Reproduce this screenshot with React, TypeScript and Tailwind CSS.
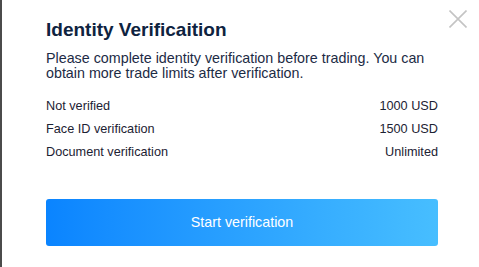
const limits = [
    { label: "Not verified", value: "1000 USD" },
    { label: "Face ID verification", value: "1500 USD" },
    { label: "Document verification", value: "Unlimited" },
];

export default function App() {
    return (
        <div className="flex h-[267px] w-[479px] overflow-hidden bg-white" style={{ fontFamily: '"Liberation Sans", Arial, sans-serif' }}>
            {/* page edge behind the dialog */}
            <div className="w-[2px] shrink-0 bg-[#4b4b4b]" />

            <div className="relative flex flex-1 flex-col pl-[44px] pr-[41px] pt-[18px]">
                <button className="absolute right-[12px] top-[10px] text-[#c4c4c4]" aria-label="Close">
                    <svg width="18" height="18" viewBox="0 0 18 18" fill="none" stroke="currentColor" strokeWidth="1.6">
                        <path d="M0.5 0.5 L17.5 17.5 M17.5 0.5 L0.5 17.5" />
                    </svg>
                </button>

                <h2 className="text-[19px] font-bold leading-[24px] text-[#0e2340]">Identity Verificaition</h2>
                <p className="mt-[9px] text-[14.3px] leading-[15px] text-[#1c2b45]">
                    Please complete identity verification before trading. You can obtain more trade limits after verification.
                </p>

                <div className="mt-[14px] flex flex-col">
                    {limits.map((row) => (
                        <div key={row.label} className="flex h-[23px] items-center justify-between text-[12.7px] text-[#1c2233]">
                            <span>{row.label}</span>
                            <span>{row.value}</span>
                        </div>
                    ))}
                </div>

                <button className="mt-[35px] h-[47px] w-full rounded-[3px] bg-gradient-to-r from-[#0a84ff] to-[#47beff] text-[14.3px] text-white">
                    Start verification
                </button>
            </div>
        </div>
    );
}
